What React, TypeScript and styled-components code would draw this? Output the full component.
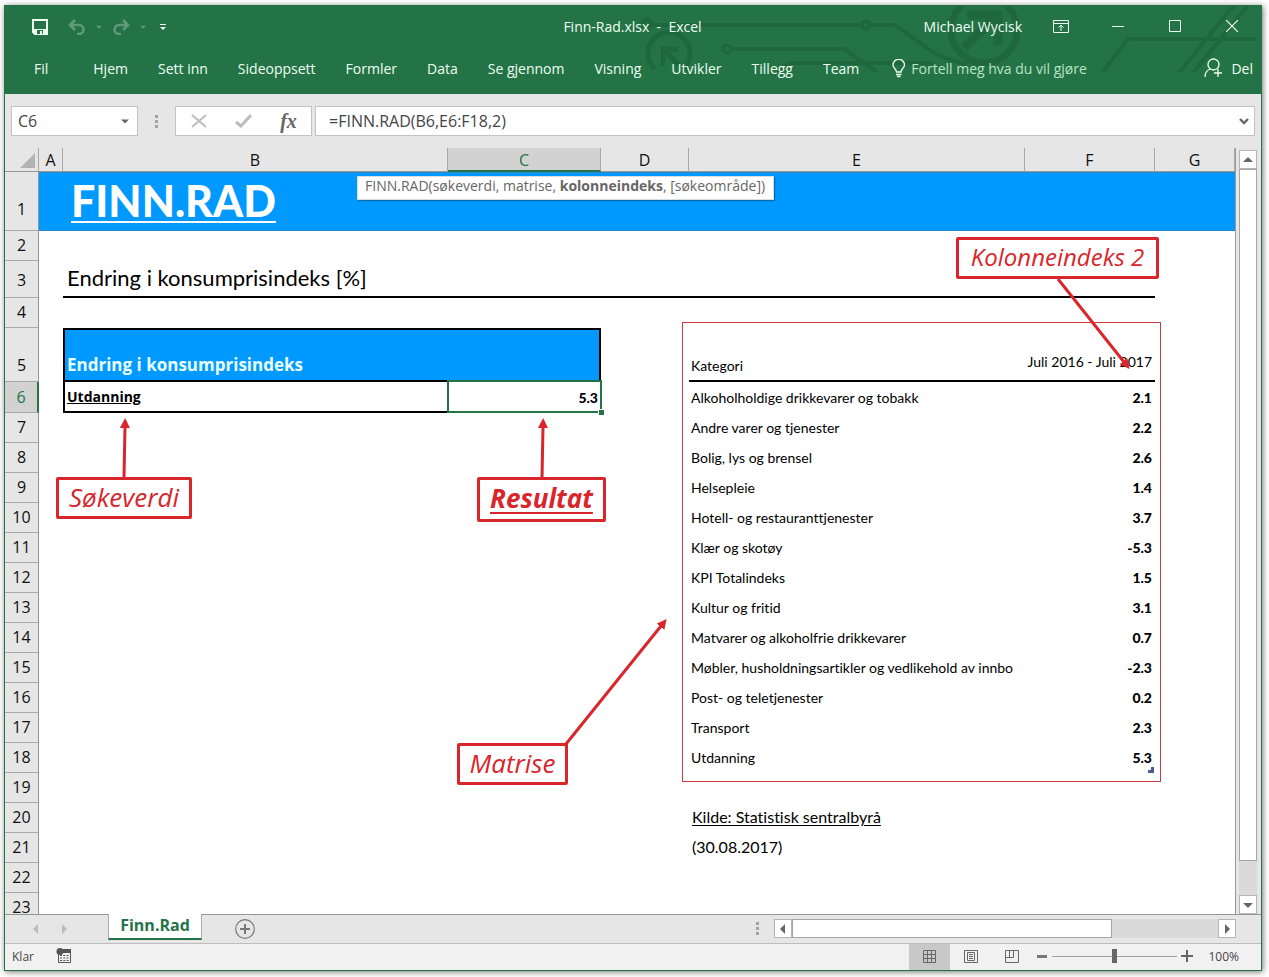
import React from "react";
import styled, { createGlobalStyle, css } from "styled-components";

const ui = `"Segoe UI", "Open Sans", "Noto Sans", sans-serif`;
const gill = `"Gill Sans MT", Lato, sans-serif`;
const wideBold = `"Gill Sans MT", "Open Sans", sans-serif`;
const comic = `"Comic Sans MS", "Open Sans", sans-serif`;
const green = "#247346";
const blue = "#0099ff";
const red = "#d8262c";
const line = "#a9a9a9";

const GlobalStyle = createGlobalStyle`
  *, *::before, *::after { box-sizing: border-box; }
  body { margin: 0; background: #fff; font-family: ${ui}; font-size: 14px; color: #222; font-variant-ligatures: none; }
  button { border: 0; padding: 0; margin: 0; background: none; font: inherit; color: inherit; cursor: pointer; }
  input { font: inherit; color: inherit; margin: 0; }
  svg { display: block; }
`;

const Page = styled.div`
  height: 100vh;
  padding: 5px 7px 6px 4px;
`;

const Window = styled.div`
  height: 100%;
  display: flex;
  flex-direction: column;
  border: 1px solid ${green};
  background: #e6e6e6;
  box-shadow: 1px 1px 6px rgba(0, 0, 0, 0.55);
  overflow: hidden;
`;

/* ---------- Title bar and ribbon ---------- */

const Header = styled.header`
  position: relative;
  flex: none;
  height: 88px;
  background: ${green};
  color: #eefff2;
`;

const Circuit = styled.svg`
  position: absolute;
  top: 0;
  right: 0;
`;

const TitleBar = styled.div`
  position: relative;
  display: grid;
  grid-template-columns: 1fr auto 1fr;
  align-items: center;
  height: 40px;
  padding-right: 1px;
`;

const QuickAccess = styled.div`
  display: flex;
  align-items: center;
  gap: 10px;
  padding: 2px 0 0 27px;
`;

const QuickButton = styled.button<{ $faded?: boolean; $gap?: number }>`
  display: flex;
  opacity: ${(p) => (p.$faded ? 0.28 : 1)};
  margin-right: ${(p) => p.$gap ?? 0}px;
`;

const Title = styled.h1`
  margin: 0;
  font-size: 14px;
  font-weight: 400;
  white-space: pre;
`;

const WindowControls = styled.div`
  display: flex;
  justify-content: flex-end;
  align-items: center;
`;

const ControlButton = styled.button`
  display: grid;
  place-items: center;
  width: 57px;
  height: 40px;
`;

const User = styled.span`
  margin-right: 10px;
`;

const Ribbon = styled.nav`
  position: relative;
  display: flex;
  align-items: center;
  gap: 30px;
  height: 44px;
  padding: 0 8px 0 29px;
  white-space: nowrap;
`;

const RibbonTab = styled.button<{ $first?: boolean }>`
  margin-right: ${(p) => (p.$first ? 15 : 0)}px;
`;

const TellMe = styled.button`
  display: flex;
  align-items: center;
  gap: 5px;
  margin-left: 3px;
  color: #b9e3c6;
`;

const Share = styled.button`
  display: flex;
  align-items: center;
  gap: 9px;
  margin-left: auto;
`;

/* ---------- Formula bar ---------- */

const FormulaBar = styled.div`
  flex: none;
  display: flex;
  align-items: center;
  height: 54px;
  padding: 0 6px;
  color: #444;
  font-size: 16px;
`;

const Field = styled.div<{ $grow?: boolean; $width?: number }>`
  display: flex;
  align-items: center;
  height: 30px;
  border: 1px solid #c3c3c3;
  background: #fff;
  ${(p) => (p.$grow ? "flex: 1;" : `flex: none; width: ${p.$width}px;`)}
`;

const FieldInput = styled.input<{ $pad: number }>`
  flex: 1;
  min-width: 0;
  height: 28px;
  border: 0;
  outline: 0;
  background: none;
  padding: 0 0 0 ${(p) => p.$pad}px;
`;

const FieldButton = styled.button<{ $width: number }>`
  display: grid;
  place-items: center;
  width: ${(p) => p.$width}px;
  height: 28px;
`;

const FxButton = styled(FieldButton)`
  font: italic 700 20px "Liberation Serif", serif;
  color: #666;
`;

const Grip = styled.span<{ $width: number }>`
  display: grid;
  place-items: center;
  flex: none;
  width: ${(p) => p.$width}px;
`;

/* ---------- Sheet ---------- */

const Body = styled.main`
  flex: 1;
  min-height: 0;
  display: flex;
`;

const Sheet = styled.div`
  position: relative;
  flex: 1;
  min-width: 0;
  overflow: hidden;
  background: #fff;
  border-right: 1px solid #9a9a9a;
`;

const Grid = styled.table`
  width: 100%;
  table-layout: fixed;
  border-collapse: separate;
  border-spacing: 0;
`;

const ColHead = styled.th<{ $selected?: boolean }>`
  height: 24px;
  padding: 1px 0 0;
  border-right: 1px solid ${line};
  border-bottom: 1px solid #8f9a94;
  background: #e6e6e6;
  font-weight: 400;
  font-size: 16px;
  line-height: 20px;
  color: #111;
  ${(p) =>
    p.$selected &&
    css`
      background: #d2d2d2;
      color: ${green};
      border-bottom: 2px solid ${green};
    `}
`;

const Corner = styled(ColHead)`
  svg {
    margin: 0 3px 0 auto;
  }
`;

const RowHead = styled.th<{ $selected?: boolean; $pad?: number }>`
  padding: 0 0 ${(p) => p.$pad ?? 5}px;
  border-right: 1px solid #8f9a94;
  border-bottom: 1px solid ${line};
  background: #e6e6e6;
  vertical-align: bottom;
  font-weight: 400;
  font-size: 16px;
  line-height: 20px;
  color: #111;
  ${(p) =>
    p.$selected &&
    css`
      background: #d2d2d2;
      color: ${green};
      border-right: 2px solid ${green};
    `}
`;

const Row = styled.tr<{ $height: number }>`
  height: ${(p) => p.$height}px;
`;

const Cell = styled.td<{ $right?: boolean; $bold?: boolean; $underlined?: boolean }>`
  position: relative;
  padding: 0 3px 0 2px;
  font-family: ${gill};
  font-size: 14px;
  line-height: 20px;
  color: #000;
  white-space: nowrap;
  text-align: ${(p) => (p.$right ? "right" : "left")};
  font-weight: ${(p) => (p.$bold ? 900 : 400)};
  border-bottom: ${(p) => (p.$underlined ? "2px solid #000" : "0")};
`;

const BannerCell = styled(Cell)`
  background: ${blue};
  border-top: 1px solid #2f86c8;
  border-bottom: 1px solid #2f86c8;
  padding-left: 8px;
`;

const Banner = styled.h2`
  display: inline-block;
  margin: 0;
  border-bottom: 2px solid #fff;
  font-size: 43px;
  line-height: 40px;
  font-weight: 900;
  color: #fff;
`;

const HeadingCell = styled(Cell)`
  padding: 0 0 2px 4px;
  font-size: 22px;
  line-height: 30px;
`;

const TableTitle = styled(Cell)`
  border: 2px solid #000;
  background: ${blue};
  color: #e9ffff;
  font-family: ${wideBold};
  font-size: 17px;
  font-weight: 700;
  vertical-align: bottom;
  padding-bottom: 5px;
`;

const LookupCell = styled(Cell)`
  border: solid #000;
  border-width: 0 0 2px 2px;
  padding-left: 2px;
  font-family: ${wideBold};
  font-weight: 700;
  text-decoration: underline;
`;

const SelectedCell = styled(Cell)`
  &::before {
    content: "";
    position: absolute;
    inset: -2px -1px 0 -1px;
    border: 2px solid ${green};
  }
  &::after {
    content: "";
    position: absolute;
    right: -3px;
    bottom: -2px;
    width: 6px;
    height: 6px;
    border: solid #fff;
    border-width: 1px 0 0 1px;
    background: ${green};
  }
`;

const LabelCell = styled(Cell)<{ $pad: number }>`
  vertical-align: bottom;
  padding-bottom: ${(p) => p.$pad}px;
`;

const NoteCell = styled(Cell)`
  font-size: 16px;
  padding: 0 0 2px 3px;
`;

const SourceLink = styled.a`
  color: #000;
  text-underline-offset: 2px;
`;

const RangeEnd = styled.i`
  position: absolute;
  right: 1px;
  bottom: 0;
  width: 6px;
  height: 6px;
  background: #4b5a96;
  clip-path: polygon(50% 0, 100% 0, 100% 100%, 0 100%, 0 50%, 50% 50%);
`;

/* ---------- Items floating over the sheet ---------- */

const Hint = styled.div`
  position: absolute;
  left: 352px;
  top: 28px;
  padding: 0 8px 4px 7px;
  border: 1px solid #d5dde5;
  box-shadow: 1px 1px 1px rgba(0, 0, 0, 0.3);
  background: #fff;
  color: #666;
  font-size: 14px;
  line-height: 18px;
  white-space: nowrap;
`;

const Arrows = styled.svg`
  position: absolute;
  left: 0;
  top: 0;
  pointer-events: none;
`;

const RangeFrame = styled.div`
  position: absolute;
  left: 677px;
  top: 174px;
  width: 479px;
  height: 460px;
  border: 1px solid #cf3a40;
  pointer-events: none;
`;

const Callout = styled.div<{ $x: number; $y: number; $w: number; $h?: number; $size?: number; $strong?: boolean }>`
  position: absolute;
  left: ${(p) => p.$x}px;
  top: ${(p) => p.$y}px;
  width: ${(p) => p.$w}px;
  height: ${(p) => p.$h ?? 42}px;
  display: grid;
  place-items: center;
  padding-bottom: 3px;
  border: 3px solid ${red};
  border-radius: 2px;
  background: #fff;
  color: ${red};
  font-family: ${comic};
  font-style: italic;
  font-size: ${(p) => p.$size ?? 26}px;
  line-height: 32px;
  white-space: nowrap;
  ${(p) =>
    p.$strong &&
    css`
      font-weight: 700;
      text-decoration: underline;
      text-decoration-thickness: 2px;
      text-underline-offset: 4px;
    `}
`;

/* ---------- Scroll bars ---------- */

const VScroll = styled.div`
  flex: none;
  display: flex;
  flex-direction: column;
  width: 18px;
  margin: 2px 4px 0 3px;
  background: #dadada;
`;

const HScroll = styled.div`
  flex: none;
  display: flex;
  width: 462px;
  height: 19px;
  margin-right: 25px;
  background: #dadada;
`;

const ScrollButton = styled.button`
  flex: none;
  display: grid;
  place-items: center;
  width: 18px;
  height: 19px;
  border: 1px solid #b5b5b5;
  background: #fff;
`;

const Track = styled.div`
  flex: 1;
  min-width: 0;
  min-height: 0;
`;

const Thumb = styled.div<{ $vertical?: boolean }>`
  border: 1px solid #a5a5a5;
  background: #fff;
  ${(p) => (p.$vertical ? "height: calc(100% - 34px);" : "width: 75%; height: 100%;")}
`;

/* ---------- Sheet tabs and status bar ---------- */

const TabBar = styled.div`
  flex: none;
  display: flex;
  align-items: center;
  height: 30px;
  padding-bottom: 1px;
  border-top: 1px solid #8f9a94;
  border-bottom: 1px solid #bdbdbd;
`;

const TabArrow = styled.button`
  display: grid;
  place-items: center;
  width: 28px;
  height: 24px;
`;

const TabArrows = styled.div`
  display: flex;
  width: 103px;
  padding-left: 17px;
`;

const SheetTab = styled.button`
  align-self: flex-start;
  width: 94px;
  height: 26px;
  margin-top: -1px;
  padding-bottom: 2px;
  border: solid #aaa;
  border-width: 0 1px;
  border-bottom: 2px solid ${green};
  background: #fff;
  color: ${green};
  font-size: 16px;
  font-weight: 700;
  line-height: 20px;
`;

const AddSheet = styled.button`
  margin-left: 33px;
`;

const Spacer = styled.div`
  flex: 1;
`;

const StatusBar = styled.footer`
  flex: none;
  display: flex;
  align-items: center;
  height: 26px;
  padding: 0 22px 0 7px;
  background: #f1f1f1;
  color: #444;
  font-size: 12px;
`;

const StatusText = styled.span`
  padding-bottom: 2px;
`;

const MacroButton = styled.button`
  margin: 0 0 3px 22px;
`;

const ViewButton = styled.button<{ $active?: boolean }>`
  display: grid;
  place-items: center;
  width: 41px;
  height: 26px;
  padding-bottom: 2px;
  background: ${(p) => (p.$active ? "#c8c8c8" : "transparent")};
`;

const ZoomButton = styled.button`
  display: grid;
  place-items: center;
  width: 20px;
  height: 26px;
  padding-bottom: 2px;
`;

const ZoomSlider = styled.input`
  appearance: none;
  width: 125px;
  height: 14px;
  margin-bottom: 2px;
  background: linear-gradient(#a0a0a0, #a0a0a0) center / 100% 1px no-repeat;
  &::-webkit-slider-thumb {
    appearance: none;
    width: 5px;
    height: 14px;
    background: #666;
  }
`;

const ZoomValue = styled(StatusText)`
  width: 42px;
  text-align: right;
`;

/* ---------- Icons ---------- */

type Dir = "up" | "down" | "left" | "right";
const trianglePaths: Record<Dir, string> = {
  up: "M0 7 5 2l5 5z",
  down: "M0 3h10L5 8z",
  left: "M7 0v10L2 5z",
  right: "M3 0v10l5-5z",
};
const Triangle = ({ dir, size = 10, color = "#666" }: { dir: Dir; size?: number; color?: string }) => (
  <svg width={size} height={size} viewBox="0 0 10 10">
    <path d={trianglePaths[dir]} fill={color} />
  </svg>
);

const Dots = () => (
  <svg width="3" height="13" fill="#a3a3a3">
    <path d="M0 0h3v3H0zM0 5h3v3H0zM0 10h3v3H0z" />
  </svg>
);

const UndoIcon = ({ flip }: { flip?: boolean }) => (
  <svg width="18" height="16" viewBox="0 0 18 16" fill="none" stroke="#fff" strokeWidth="2.6">
    <g transform={flip ? "matrix(-1 0 0 1 18 0)" : undefined}>
      <path d="M7 1 2 6l5 5M2.500 6H11a4.500 4.500 0 0 1 0 9H9" />
    </g>
  </svg>
);

const circuitColor = "#1f673e";
const CircuitArt = () => (
  <Circuit width="620" height="66" fill="none" stroke={circuitColor} strokeWidth="4" aria-hidden="true">
    <path d="M14 63a21 21 0 1 1 28 0" strokeWidth="5" />
    <path d="M22 60V43h15M23 44l15 15" strokeWidth="5" />
    <circle cx="6" cy="17" r="4" />
    <path d="M10 19h211M229 19h25l42 30 30 10" />
    <circle cx="225" cy="19" r="4" />
    <circle cx="86" cy="43" r="4" strokeWidth="3" />
    <path d="M91 43h112l34 24M138 68q4-11 14-11h140" />
    <circle cx="343" cy="24" r="33" strokeWidth="7" />
    <path d="M323 42l32-32M326 9h31v30" strokeWidth="9" />
    <path d="M460 68l27-35h128M537 68l57-70M551 68l57-70" />
  </Circuit>
);

/* ---------- Data ---------- */

const tabs = ["Fil", "Hjem", "Sett inn", "Sideoppsett", "Formler", "Data", "Se gjennom", "Visning", "Utvikler", "Tillegg", "Team"];

const columns: [string, number | undefined][] = [
  ["A", 24],
  ["B", 385],
  ["C", 153],
  ["D", 88],
  ["E", 336],
  ["F", 130],
  ["G", undefined],
];

const categories: [string, string][] = [
  ["Andre varer og tjenester", "2.2"],
  ["Bolig, lys og brensel", "2.6"],
  ["Helsepleie", "1.4"],
  ["Hotell- og restauranttjenester", "3.7"],
  ["Klær og skotøy", "-5.3"],
  ["KPI Totalindeks", "1.5"],
  ["Kultur og fritid", "3.1"],
  ["Matvarer og alkoholfrie drikkevarer", "0.7"],
  ["Møbler, husholdningsartikler og vedlikehold av innbo", "-2.3"],
  ["Post- og teletjenester", "0.2"],
  ["Transport", "2.3"],
  ["Utdanning", "5.3"],
];

const EmptyRow = ({ n }: { n: number }) => (
  <Row $height={30}>
    <RowHead scope="row">{n}</RowHead>
    <Cell colSpan={7} />
  </Row>
);

const NoteRow = ({ n, children }: { n: number; children: React.ReactNode }) => (
  <Row $height={30}>
    <RowHead scope="row">{n}</RowHead>
    <Cell colSpan={4} />
    <NoteCell>{children}</NoteCell>
    <Cell colSpan={2} />
  </Row>
);

const SheetGrid = () => (
  <Grid>
    <colgroup>
      <col style={{ width: 34 }} />
      {columns.map(([name, width]) => (
        <col key={name} style={{ width }} />
      ))}
    </colgroup>
    <thead>
      <tr>
        <Corner aria-label="Merk alt">
          <svg width="15" height="15">
            <path d="M15 0v15H0z" fill="#b3b3b3" />
          </svg>
        </Corner>
        {columns.map(([name]) => (
          <ColHead key={name} scope="col" $selected={name === "C"}>
            {name}
          </ColHead>
        ))}
      </tr>
    </thead>
    <tbody>
      <Row $height={59}>
        <RowHead scope="row" $pad={11}>1</RowHead>
        <BannerCell />
        <BannerCell colSpan={6}>
          <Banner>FINN.RAD</Banner>
        </BannerCell>
      </Row>
      <EmptyRow n={2} />
      <Row $height={37}>
        <RowHead scope="row" $pad={7}>3</RowHead>
        <Cell />
        <HeadingCell colSpan={5} $underlined>
          Endring i konsumprisindeks [%]
        </HeadingCell>
        <Cell />
      </Row>
      <EmptyRow n={4} />
      <Row $height={54}>
        <RowHead scope="row" $pad={6}>5</RowHead>
        <Cell />
        <TableTitle colSpan={2}>Endring i konsumprisindeks</TableTitle>
        <Cell />
        <LabelCell $pad={4} $underlined>Kategori</LabelCell>
        <LabelCell $pad={8} $right $underlined>Juli 2016 - Juli 2017</LabelCell>
        <Cell />
      </Row>
      <Row $height={31}>
        <RowHead scope="row" $selected>6</RowHead>
        <Cell />
        <LookupCell>Utdanning</LookupCell>
        <SelectedCell $bold $right>5.3</SelectedCell>
        <Cell />
        <Cell>Alkoholholdige drikkevarer og tobakk</Cell>
        <Cell $bold $right>2.1</Cell>
        <Cell />
      </Row>
      {categories.map(([label, value], i) => (
        <Row key={label} $height={30}>
          <RowHead scope="row">{i + 7}</RowHead>
          <Cell colSpan={4} />
          <Cell>{label}</Cell>
          <Cell $bold $right>
            {value}
            {i === categories.length - 1 && <RangeEnd />}
          </Cell>
          <Cell />
        </Row>
      ))}
      <EmptyRow n={19} />
      <NoteRow n={20}>
        <SourceLink href="#kilde">Kilde: Statistisk sentralbyrå</SourceLink>
      </NoteRow>
      <NoteRow n={21}>(30.08.2017)</NoteRow>
      <EmptyRow n={22} />
      <EmptyRow n={23} />
    </tbody>
  </Grid>
);

export default function App() {
  return (
    <Page>
      <GlobalStyle />
      <Window>
        <Header>
          <CircuitArt />
          <TitleBar>
            <QuickAccess>
              <QuickButton aria-label="Lagre" $gap={10}>
                <svg width="16" height="16" fill="none" stroke="#eefff2" strokeWidth="2">
                  <path d="M1 1h14v14H3l-2-2z" />
                  <path d="M1 10h14v5H1z" fill="#eefff2" stroke="none" />
                  <path d="M5 11h6v4H5z" fill={green} stroke="none" />
                  <path d="M8 12h2v4H8z" fill="#eefff2" stroke="none" />
                </svg>
              </QuickButton>
              <QuickButton aria-label="Angre" $faded>
                <UndoIcon />
              </QuickButton>
              <QuickButton aria-label="Angreliste" $faded>
                <Triangle dir="down" size={6} color="#fff" />
              </QuickButton>
              <QuickButton aria-label="Gjør om" $faded>
                <UndoIcon flip />
              </QuickButton>
              <QuickButton aria-label="Gjør om-liste" $faded $gap={4}>
                <Triangle dir="down" size={6} color="#fff" />
              </QuickButton>
              <QuickButton aria-label="Tilpass verktøylinjen">
                <svg width="6" height="7" fill="#eefff2">
                  <path d="M0 0h6v1H0zM0 3h6L3 6z" />
                </svg>
              </QuickButton>
            </QuickAccess>
            <Title>{"Finn-Rad.xlsx  -  Excel"}</Title>
            <WindowControls>
              <User>Michael Wycisk</User>
              <ControlButton aria-label="Båndalternativer">
                <svg width="16" height="13" fill="none" stroke="#eefff2">
                  <path d="M.5.5h15v12H.5zM.5 3.500h15M8 11V5M5.500 7.500 8 5l2.500 2.500" />
                </svg>
              </ControlButton>
              <ControlButton aria-label="Minimer">
                <svg width="12" height="1"><path d="M0 0h12v1H0z" fill="#eefff2" /></svg>
              </ControlButton>
              <ControlButton aria-label="Maksimer">
                <svg width="12" height="12"><path d="M.5.5h11v11H.5z" fill="none" stroke="#eefff2" /></svg>
              </ControlButton>
              <ControlButton aria-label="Lukk">
                <svg width="12" height="12"><path d="M0 0l12 12M12 0 0 12" stroke="#eefff2" strokeWidth="1.200" /></svg>
              </ControlButton>
            </WindowControls>
          </TitleBar>
          <Ribbon>
            {tabs.map((t, i) => (
              <RibbonTab key={t} $first={i === 0}>{t}</RibbonTab>
            ))}
            <TellMe>
              <svg width="14" height="19" fill="none" stroke="#eefff2" strokeWidth="1.300">
                <path d="M4.500 13c0-3-3.500-4-3.500-7a5.500 5.500 0 0 1 11.500 0c0 3-3.500 4-3.500 7z" />
                <path d="M4 15.500h5.500M5 17.500h3.500" strokeWidth="1.600" />
              </svg>
              Fortell meg hva du vil gjøre
            </TellMe>
            <Share>
              <svg width="18" height="20" fill="none" stroke="#eefff2" strokeWidth="1.300">
                <circle cx="9.500" cy="6.500" r="5.500" />
                <path d="M1 19c0-4 2-7 5.500-8M10 15h8M14 11v8" />
              </svg>
              Del
            </Share>
          </Ribbon>
        </Header>

        <FormulaBar>
          <Field $width={127}>
            <FieldInput $pad={6} aria-label="Navneboks" defaultValue="C6" />
            <FieldButton $width={24} aria-label="Vis navn">
              <Triangle dir="down" size={8} />
            </FieldButton>
          </Field>
          <Grip $width={37}><Dots /></Grip>
          <Field $width={137}>
            <FieldButton $width={45} aria-label="Avbryt">
              <svg width="16" height="14"><path d="M1 1l14 12M15 1 1 13" stroke="#bdbdbd" strokeWidth="2" /></svg>
            </FieldButton>
            <FieldButton $width={45} aria-label="Skriv inn">
              <svg width="17" height="14"><path d="M1 8l5 4L16 1" fill="none" stroke="#bdbdbd" strokeWidth="3" /></svg>
            </FieldButton>
            <FxButton $width={45} aria-label="Sett inn funksjon">fx</FxButton>
          </Field>
          <Grip $width={3} />
          <Field $grow>
            <FieldInput $pad={13} aria-label="Formel" defaultValue="=FINN.RAD(B6,E6:F18,2)" />
            <FieldButton $width={20} aria-label="Utvid formellinjen">
              <svg width="10" height="7"><path d="M1 1l4 4 4-4" fill="none" stroke="#666" strokeWidth="2.400" /></svg>
            </FieldButton>
          </Field>
        </FormulaBar>

        <Body>
          <Sheet>
            <SheetGrid />
            <Hint>
              FINN.RAD(søkeverdi, matrise, <b>kolonneindeks</b>, [søkeområde])
            </Hint>
            <RangeFrame />
            <Arrows width="1230" height="766" stroke={red} strokeWidth="3" fill={red} aria-hidden="true">
              <defs>
                <marker id="head" markerUnits="userSpaceOnUse" markerWidth="10" markerHeight="10" refX="1" refY="5" orient="auto">
                  <path d="M0 0l10 5-10 5z" stroke="none" />
                </marker>
              </defs>
              <path d="M119 330L120 279" markerEnd="url(#head)" />
              <path d="M537 330L538 279" markerEnd="url(#head)" />
              <path d="M1053 131L1119 214" markerEnd="url(#head)" />
              <path d="M561 596L656 478" markerEnd="url(#head)" />
            </Arrows>
            <Callout $x={951} $y={89} $w={203} $size={24}>Kolonneindeks 2</Callout>
            <Callout $x={51} $y={329} $w={136}>Søkeverdi</Callout>
            <Callout $x={472} $y={329} $w={129} $h={45} $strong>Resultat</Callout>
            <Callout $x={452} $y={595} $w={111}>Matrise</Callout>
          </Sheet>
          <VScroll>
            <ScrollButton aria-label="Rull opp"><Triangle dir="up" /></ScrollButton>
            <Track><Thumb $vertical /></Track>
            <ScrollButton aria-label="Rull ned"><Triangle dir="down" /></ScrollButton>
          </VScroll>
        </Body>

        <TabBar>
          <TabArrows>
            <TabArrow aria-label="Forrige ark"><Triangle dir="left" color="#bbb" /></TabArrow>
            <TabArrow aria-label="Neste ark"><Triangle dir="right" color="#bbb" /></TabArrow>
          </TabArrows>
          <SheetTab>Finn.Rad</SheetTab>
          <AddSheet aria-label="Nytt ark">
            <svg width="20" height="20" fill="none" stroke="#777">
              <circle cx="10" cy="10" r="9.300" strokeWidth="1.200" />
              <path d="M5 10h10M10 5v10" strokeWidth="2" />
            </svg>
          </AddSheet>
          <Spacer />
          <Grip $width={33}><Dots /></Grip>
          <HScroll>
            <ScrollButton aria-label="Rull til venstre"><Triangle dir="left" /></ScrollButton>
            <Track><Thumb /></Track>
            <ScrollButton aria-label="Rull til høyre"><Triangle dir="right" /></ScrollButton>
          </HScroll>
        </TabBar>

        <StatusBar>
          <StatusText>Klar</StatusText>
          <MacroButton aria-label="Spill inn makro">
            <svg width="16" height="15">
              <path d="M2.500 5v9.500h12V1.500H7" fill="none" stroke="#555" />
              <path d="M7 1h8v4H7z" fill="#555" />
              <circle cx="4" cy="3.500" r="3.500" fill="#555" />
              <path d="M4 7.500h9M4 10h9M4 12.500h9" stroke="#555" strokeDasharray="2 1.300" />
            </svg>
          </MacroButton>
          <Spacer />
          <ViewButton $active aria-label="Normal">
            <svg width="13" height="13" fill="none" stroke="#666"><path d="M.5.5h12v12H.5zM4.500 0v13M8.500 0v13M0 4.500h13M0 8.500h13" /></svg>
          </ViewButton>
          <ViewButton aria-label="Sideoppsett">
            <svg width="14" height="13" fill="none" stroke="#666"><path d="M.5.5h13v12H.5zM3.500 2.500h7v8h-7zM5 4.500h4M5 6.500h4M5 8.500h4" /></svg>
          </ViewButton>
          <ViewButton aria-label="Sideskift">
            <svg width="14" height="13" fill="none" stroke="#666"><path d="M.5.5h13v12H.5zM.5 7.500h8v-7M4.500.5v7" /></svg>
          </ViewButton>
          <ZoomButton aria-label="Zoom ut">
            <svg width="10" height="3"><path d="M0 0h10v3H0z" fill="#777" /></svg>
          </ZoomButton>
          <ZoomSlider type="range" min="10" max="190" defaultValue="100" aria-label="Zoom" />
          <ZoomButton aria-label="Zoom inn">
            <svg width="12" height="12"><path d="M5 0h2v5h5v2H7v5H5V7H0V5h5z" fill="#666" /></svg>
          </ZoomButton>
          <ZoomValue>100%</ZoomValue>
        </StatusBar>
      </Window>
    </Page>
  );
}
